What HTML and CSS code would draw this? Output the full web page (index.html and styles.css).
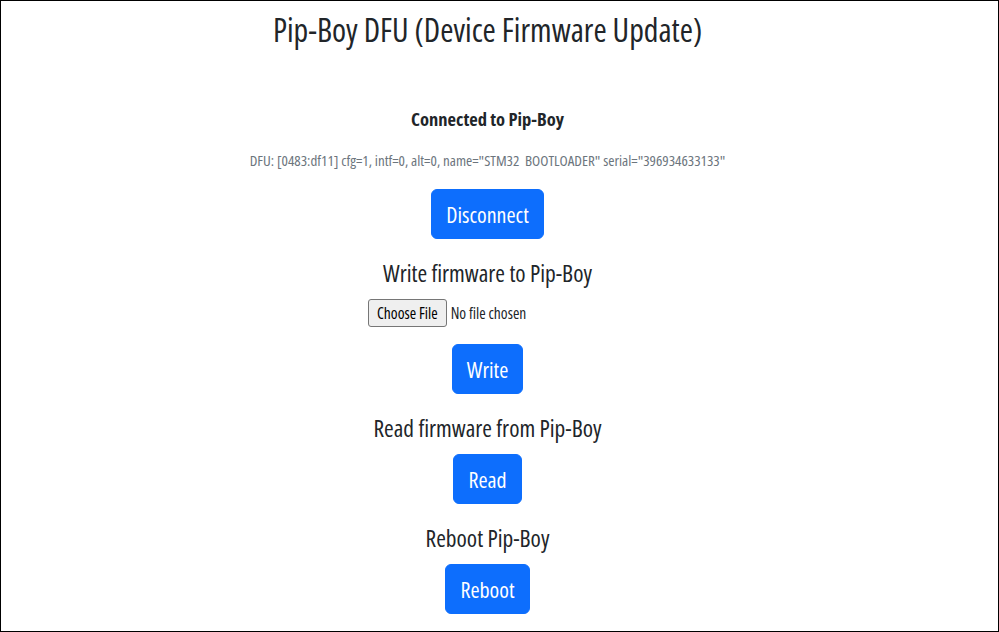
FILE: index.html
```html
<!DOCTYPE html>
<html lang="en">
<head>
    <meta charset="UTF-8">
    <meta name="viewport" content="width=device-width, initial-scale=1.0">
    <title>Pip-Boy DFU</title>
    <link rel="stylesheet" href="styles.css">
</head>
<body>
    <div class="frame">
        <div class="page">
            <h1 class="title">Pip-Boy DFU (Device Firmware Update)</h1>

            <div class="status">
                <h5 class="status-title">Connected to Pip-Boy</h5>
                <p class="device-info">DFU: [0483:df11] cfg=1, intf=0, alt=0, name="STM32&nbsp; BOOTLOADER" serial="396934633133"</p>
                <button class="btn">Disconnect</button>
            </div>

            <div class="section">
                <h4 class="section-title">Write firmware to Pip-Boy</h4>
                <input type="file" id="firmware-file" class="file-input">
                <button class="btn">Write</button>
            </div>

            <div class="section">
                <h4 class="section-title">Read firmware from Pip-Boy</h4>
                <button class="btn">Read</button>
            </div>

            <div class="section">
                <h4 class="section-title">Reboot Pip-Boy</h4>
                <button class="btn">Reboot</button>
            </div>
        </div>
    </div>
</body>
</html>
```

FILE: styles.css
```css
html, body {
    margin: 0;
    padding: 0;
}
body {
    font-family: "Open Sans", "Roboto", sans-serif;
    font-stretch: 75%;
    color: #212529;
    background: #fff;
}
.frame {
    box-sizing: border-box;
    width: 999px;
    height: 632px;
    border: 1px solid #000;
    overflow: hidden;
}
.page {
    padding-right: 24px;
    text-align: center;
}
.title {
    margin: 9px 0 0;
    font-size: 32px;
    line-height: 40px;
    font-weight: 500;
}
.status {
    margin-top: 57px;
    display: flex;
    flex-direction: column;
    align-items: center;
}
.status-title {
    margin: 0;
    font-size: 18.5px;
    line-height: 24px;
    font-weight: 700;
}
.device-info {
    margin: 19px 0 0;
    font-size: 15px;
    line-height: 21px;
    color: #6c757d;
}
.status .btn {
    margin-top: 18px;
}
.section {
    margin-top: 20px;
    display: flex;
    flex-direction: column;
    align-items: center;
}
.section-title {
    margin: 0 0 12px;
    font-size: 23.4px;
    line-height: 28px;
    font-weight: 400;
}
.file-input {
    font-family: inherit;
    font-stretch: 75%;
    font-size: 15.5px;
    color: #212529;
    height: 28px;
    margin: 0 14px 17px 0;
}
.file-input::file-selector-button {
    font-family: inherit;
    font-stretch: 75%;
    font-size: 15.5px;
    height: 28px;
    padding: 0 8px;
    margin-right: 4px;
    border: 1px solid #767676;
    border-radius: 3px;
    background: #efefef;
    color: #000;
}
.btn {
    font-family: inherit;
    font-stretch: 75%;
    font-size: 22px;
    line-height: 30px;
    padding: 9px 14px;
    border: 1px solid #0d6efd;
    border-radius: 6px;
    background-color: #0d6efd;
    color: #fff;
    cursor: pointer;
}
.btn:hover {
    background-color: #0b5ed7;
}
```
